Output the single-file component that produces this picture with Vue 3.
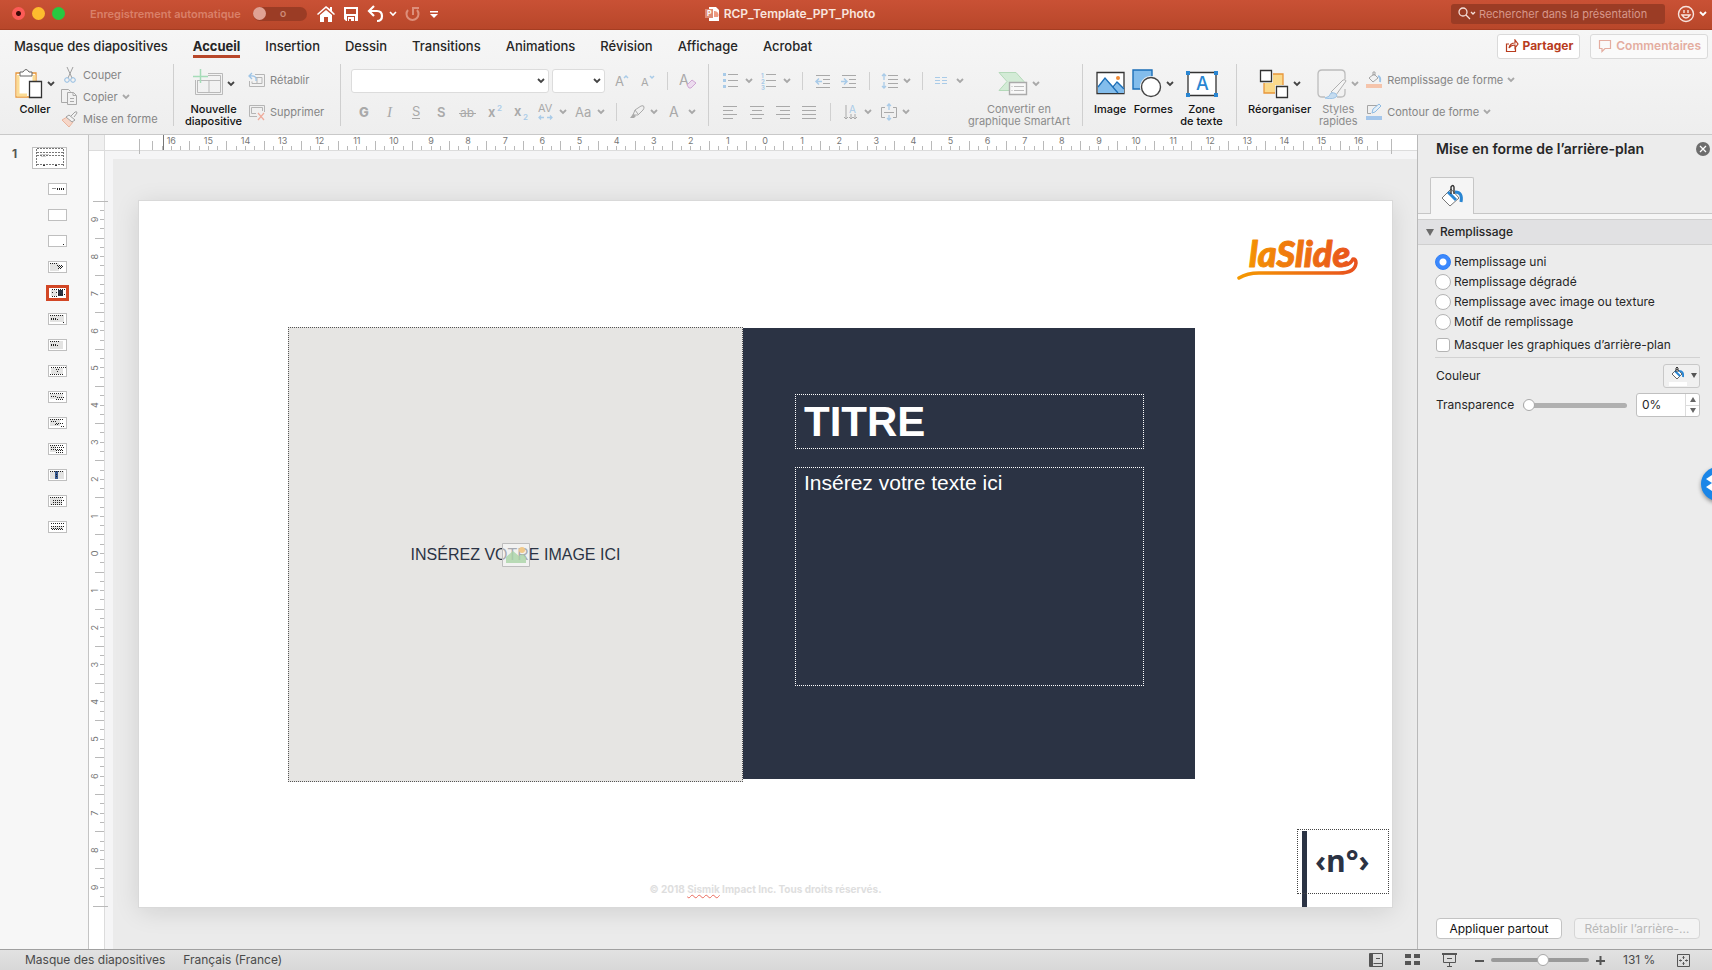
<script setup>
import { ref } from "vue";

const tabs = ["Masque des diapositives", "Accueil", "Insertion", "Dessin", "Transitions", "Animations", "Révision", "Affichage", "Acrobat"];
const activeTab = ref("Accueil");

const fill = ref("uni");
const fills = [
	{ id: "uni", label: "Remplissage uni" },
	{ id: "degrade", label: "Remplissage dégradé" },
	{ id: "image", label: "Remplissage avec image ou texture" },
	{ id: "motif", label: "Motif de remplissage" },
];
const hideGraphics = ref(false);
const transparency = ref(0);
const zoom = ref(131);

// 18x18 icons of the small ribbon tools
const g = "#a9a9a9";
const b = "#a9cbe8";
const bars = (list) => list.map(([x, y, w]) => `<path d="M${x} ${y}.5h${w}" stroke="${g}"/>`).join("");
const letter = (t, x, y, size, extra = "") => `<text x="${x}" y="${y}" font-size="${size}" fill="${g}" ${extra}>${t}</text>`;
const icons = {
	bold: letter("G", 4, 14, 13, 'font-weight="800"'),
	italic: letter("I", 6, 14, 15, 'font-style="italic" font-family="Liberation Serif, serif"'),
	underline: letter("S", 5, 13, 13) + `<path d="M5 15.5h8" stroke="${g}"/>`,
	shadow: letter("S", 4, 14, 13, 'font-weight="600"'),
	strike: letter("ab", 1, 14, 12) + `<path d="M0 10.5h17" stroke="${g}"/>`,
	sup: letter("x", 3, 14, 13, 'font-weight="600"') + `<text x="12" y="8" font-size="8" fill="${b}" font-weight="600">2</text>`,
	sub: letter("x", 3, 13, 13, 'font-weight="600"') + `<text x="12" y="17" font-size="8" fill="${b}" font-weight="600">2</text>`,
	kerning: letter("AV", 1, 9, 11) + `<path d="M2 14.5h5M10 14.5h5M4 12.5l-2 2 2 2M13 12.5l2 2-2 2" stroke="${b}" fill="none" stroke-width="1.3"/>`,
	caseAa: letter("Aa", 0, 14, 13),
	grow: letter("A", 3, 14, 13) + `<path d="M12 6l2-2 2 2" stroke="${b}" fill="none" stroke-width="1.5"/>`,
	shrink: letter("A", 3, 14, 11) + `<path d="M12 4l2 2 2-2" stroke="${b}" fill="none" stroke-width="1.5"/>`,
	clear: letter("A", 0, 13, 14) + `<path d="M8 13l5-5 4 3-5 5h-2z" stroke="#cfa6d3" fill="#ecdcee"/>`,
	marker: `<path d="M5 12l2-5 6-4q3-1 3 1t-1 3l-5 5zM7 7l3 4" stroke="${g}" fill="none"/><path d="M2 15l3-4 3 2-2 2z" fill="${g}"/>`,
	color: letter("A", 3, 14, 14),
	bullets: [3, 9, 15].map((y) => `<path d="M0 ${y - 2}h3v3h-3z" fill="${b}"/>`).join("") + bars([[5, 2, 10], [5, 8, 10], [5, 14, 10]]),
	numbers: [1, 2, 3].map((n) => `<text x="0" y="${n * 6}" font-size="6" fill="${b}" font-weight="700">${n}</text>`).join("") + bars([[5, 2, 10], [5, 8, 10], [5, 14, 10]]),
	outdent: bars([[2, 3, 14], [9, 7, 7], [9, 11, 7], [2, 15, 14]]) + `<path d="M8 9.5H2M5 6.5l-3 3 3 3" stroke="${b}" fill="none" stroke-width="1.5"/>`,
	indent: bars([[2, 3, 14], [9, 7, 7], [9, 11, 7], [2, 15, 14]]) + `<path d="M1 9.5h6M4 6.5l3 3-3 3" stroke="${b}" fill="none" stroke-width="1.5"/>`,
	spacing: bars([[7, 3, 10], [7, 7, 10], [7, 11, 10], [7, 15, 10]]) + `<path d="M3 2v6M3 10v6M1 4l2-2 2 2M1 14l2 2 2-2" stroke="${b}" fill="none" stroke-width="1.3"/>`,
	columns: [5, 8, 11].map((y) => `<path d="M1 ${y}.5h5M8 ${y}.5h5" stroke="${b}"/>`).join(""),
	left: bars([[0, 3, 14], [0, 7, 10], [0, 11, 14], [0, 15, 10]]),
	center: bars([[1, 3, 14], [3, 7, 10], [1, 11, 14], [3, 15, 10]]),
	right: bars([[1, 3, 14], [5, 7, 10], [1, 11, 14], [5, 15, 10]]),
	justify: bars([[1, 3, 14], [1, 7, 14], [1, 11, 14], [1, 15, 14]]),
	direction: `<path d="M4 2v14M2 14l2 2 2-2M9 11v5M13 11v5M7 14l2 2 2-2M11 14l2 2 2-2" stroke="${g}" fill="none"/><text x="7" y="10" font-size="10" fill="${b}">A</text>`,
	valign: `<path d="M5 4.5H1.5v10H5M13 4.5h3.5v10H13M4 9.5h10" stroke="${g}" fill="none"/><path d="M9 1v6M9 12v5M7 3l2-2 2 2M7 15l2 2 2-2" stroke="${b}" fill="none" stroke-width="1.3"/>`,
	cut: `<path d="M6 1l5 11M12 1L7 12" stroke="#a0a0a0" fill="none"/><circle cx="6" cy="14" r="2.3" stroke="#8fbbe2" fill="none"/><circle cx="12" cy="14" r="2.3" stroke="#8fbbe2" fill="none"/>`,
	copy: `<path d="M6 14.5H.5v-13h7l2 2M6.500 4.500h6l3 3v9h-9zM12 4.500v3h3M9 10.500h4M9 13.500h4" stroke="#a9a9a9" fill="none"/>`,
	brush: `<path d="M1 10l5-3 6 5-4 5z" fill="#f6d6c8" stroke="#e9b49d"/><path d="M5 7l3-2 6 5-3 2zM10 6l4-4q2-1 2 1l-3 4" fill="#f2f2f2" stroke="#a0a0a0"/>`,
	reset: `<path d="M7 3.5h9.500v12H1.500V10M8 6.500h6v6h-10v-2M9 7v6" stroke="#b5b5b5" fill="none"/><path d="M8 10q1-6-6-5M4 2L1 5l3 3" stroke="#9cc3e6" fill="none" stroke-width="1.3"/>`,
	remove: `<path d="M9 13.5H1.5v-11h15V9M8 10.500H3.500v-6h11V8" stroke="#b5b5b5" fill="none"/><path d="M10 10l6 7M16 10l-6 7" stroke="#efab9b" fill="none" stroke-width="1.2"/>`,
	bucket: `<path d="M4 7l5-4 4 4-5 4zM8 5V1h2v4" stroke="#a5a5a5" fill="none"/><path d="M13 5q3 1 2 6" stroke="#9cc3e6" fill="none" stroke-width="2"/><path d="M1 13h16v4H1z" fill="#f5c4ab"/>`,
	outline: `<path d="M12 2.5H2.5v8H6" stroke="#a5a5a5" fill="none"/><path d="M7 10l1-4 6-5 2 2-6 6z" fill="#e4eff8" stroke="#8fbbe2"/><path d="M1 13h16v4H1z" fill="#a4c6ea"/>`,
};

const fontTools = ["bold", "italic", "underline", "shadow", "strike", "sup", "sub"];
const rows = {
	font: [...fontTools.map((icon) => ({ icon })), { icon: "kerning", menu: true }, { icon: "caseAa", menu: true }, { sep: true }, { icon: "marker", menu: true }, { icon: "color", menu: true }],
	para1: [{ icon: "bullets", menu: true }, { icon: "numbers", menu: true }, { sep: true }, { icon: "outdent" }, { icon: "indent" }, { sep: true }, { icon: "spacing", menu: true }, { sep: true }, { icon: "columns", menu: true }],
	para2: [{ icon: "left" }, { icon: "center" }, { icon: "right" }, { icon: "justify" }, { sep: true }, { icon: "direction", menu: true }, { icon: "valign", menu: true }],
	size: [{ icon: "grow" }, { icon: "shrink" }, { sep: true }, { icon: "clear" }],
};

const clipboard = [
	{ icon: "cut", label: "Couper" },
	{ icon: "copy", label: "Copier", menu: true },
	{ icon: "brush", label: "Mise en forme" },
];
const slideTools = [
	{ icon: "reset", label: "Rétablir" },
	{ icon: "remove", label: "Supprimer" },
];
const shapeTools = [
	{ icon: "bucket", label: "Remplissage de forme", menu: true },
	{ icon: "outline", label: "Contour de forme", menu: true },
];

// Ruler graduations: every quarter of a centimetre, as a percentage of the slide
function graduate(half, max) {
	const out = [];
	for (let q = -max; q <= max; q++) {
		out.push({
			key: q,
			pos: 50 + (q / 4 / half) * 50 + "%",
			tall: Math.abs(q) % 4 === 2,
			label: q % 4 === 0 ? Math.abs(q / 4) : null,
		});
	}
	return out;
}
const hTicks = graduate(16.87, 66);
const vTicks = graduate(9.5, 37);

// Layout thumbnails: grey block, dark marks and dashed placeholders
const layouts = [
	{ marks: "M4 5.5h4", dots: "M9 5h8M9 6h8" },
	{},
	{ dots: "M15 9h2" },
	{ block: [2, 2, 9, 8], dots: "M2 2h8M9 4h6M10 5h5M11 6h4M10 7h3" },
	{ block: [3, 3, 6, 6], dots: "M4 2h13M4 9h6M4 5h1M8 5h2M10 7h7", dark: [10, 3, 5, 6] },
	{ block: [2, 2, 14, 7], dots: "M2 2h14M3 5h6M3 6h7M15 9h2" },
	{ block: [2, 2, 13, 8], dots: "M2 2h10M3 5h6M3 6h7" },
	{ block: [3, 3, 12, 6], dots: "M3 2h15M8 4h3M9 6h2M2 9h14" },
	{ block: [2, 3, 13, 5], dots: "M2 2h14M3 5h5M9 6h7M8 8h7" },
	{ block: [2, 2, 10, 7], dots: "M2 2h14M3 4h5M8 6h8M7 7h4M13 9h3" },
	{ block: [2, 2, 6, 7], dots: "M2 2h14M3 4h13M3 6h12M8 7h8M8 9h8" },
	{ block: [2, 2, 14, 8], dots: "M2 2h14M8 5h2M8 7h2", dark: [7, 2, 3, 8] },
	{ block: [2, 2, 12, 8], dots: "M2 2h14M5 5h11M5 7h10M3 9h12" },
	{ block: [3, 5, 12, 3], dots: "M3 2h14M3 5h14M3 7h12M4 8h12" },
];
const selected = ref(4);
</script>

<template>
	<div class="app">
		<header class="titlebar">
			<div class="lights">
				<i class="light red"></i>
				<i class="light yellow"></i>
				<i class="light green"></i>
			</div>
			<label class="autosave">
				<span>Enregistrement automatique</span>
				<input type="checkbox" class="hidden-box" disabled />
				<span class="switch"><i class="knob"></i><em>O</em></span>
			</label>
			<div class="quick">
				<button aria-label="Accueil">
					<svg width="18" height="18" fill="#fff"><path d="M9 1L0 9l1 1 8-7 8 7 1-1-3-3V2h-2v2zM3 10v7h4v-5h4v5h4v-7L9 5z" /></svg>
				</button>
				<button aria-label="Enregistrer">
					<svg width="16" height="18"><path d="M1 2h14v14H3l-2-2z" fill="#fff" /><path d="M3 4h10v5H3zM4 11h8v5H4z" fill="#bd4a2d" /><path d="M5 12h6v4H8v-2H6v2H5z" fill="#fff" /></svg>
				</button>
				<button aria-label="Annuler" class="pair">
					<svg width="17" height="18" fill="none" stroke="#fff" stroke-width="2.2"><path d="M7 1L2 6l5 5M2 6h8q5 0 5 5t-5 5" /></svg>
					<svg width="8" height="6" fill="none" stroke="#fff" stroke-width="1.6"><path d="M1 1l3 3 3-3" /></svg>
				</button>
				<button aria-label="Rétablir" disabled>
					<svg width="16" height="18" fill="none" stroke="#dd8f7b" stroke-width="2"><path d="M3 5a6 6 0 1 0 9 0M8 10V3h6" /></svg>
				</button>
				<button aria-label="Personnaliser">
					<svg width="10" height="18" fill="#fff"><path d="M1 6h8v1.5H1zM1 9h8l-4 4z" /></svg>
				</button>
			</div>
			<div class="doc">
				<svg width="15" height="16"><path d="M4 1h7l3 3v11H4z" fill="#fff" /><path d="M9 5a4 4 0 0 1 4 6H9z" fill="#ee9a80" /><path d="M0 3h8v9H0z" fill="#dd8a74" /><text x="2" y="10" font-size="7" font-weight="700" fill="#fff">P</text></svg>
				<span>RCP_Template_PPT_Photo</span>
			</div>
			<label class="search">
				<svg width="20" height="14" fill="none" stroke="#f5ded8" stroke-width="1.3"><circle cx="6" cy="5" r="4" /><path d="M9 8l4 4M14 5l2 2 2-2" /></svg>
				<input type="text" placeholder="Rechercher dans la présentation" aria-label="Rechercher dans la présentation" />
			</label>
			<button class="pair smile" aria-label="Commentaires Microsoft">
				<svg width="18" height="18" fill="none" stroke="#f8e4de" stroke-width="1.4"><circle cx="9" cy="9" r="7.5" /><path d="M5 10q4 6 8 0zM7 5v3M11 5v3" /></svg>
				<svg width="8" height="6" fill="none" stroke="#fff" stroke-width="1.8"><path d="M1 1l3 3 3-3" /></svg>
			</button>
		</header>

		<section class="ribbon">
			<div class="tabs">
				<nav>
					<button v-for="t in tabs" :key="t" class="tab" :class="{ active: t === activeTab }" @click="activeTab = t">{{ t }}</button>
				</nav>
				<button class="share">
					<svg width="14" height="14" fill="none" stroke="#b83c1e" stroke-width="1.2"><path d="M4 5H1.5v7.5h9V9M4 9q1-5 6-5V1l3 4-3 4V6q-4 0-6 3z" /></svg>
					Partager
				</button>
				<button class="share faded" disabled>
					<svg width="14" height="14" fill="none" stroke="#e4ada0" stroke-width="1.2"><path d="M1.5 1.5h11v8H7l-3 3v-3H1.5z" /></svg>
					Commentaires
				</button>
			</div>

			<div class="tools">
				<div class="group clip">
					<button class="big">
						<span class="pic">
							<svg width="28" height="30"><path d="M1 4h20v24H1z" fill="#fff" stroke="#e8963a" stroke-width="1.3" /><path d="M3 6v20h9M19 6v6" stroke="#fbdc95" stroke-width="3" fill="none" /><path d="M5 7V3h3q3-5 6 0h3v4z" fill="#fff" stroke="#666" /><path d="M14.5 12.5h12v16h-12z" fill="#fff" stroke="#333" stroke-width="1.3" /></svg>
							<svg class="caret dark"><path d="M1 1l3 3 3-3" /></svg>
						</span>
						<span>Coller</span>
					</button>
					<div class="small three">
						<button v-for="s in clipboard" :key="s.icon" disabled>
							<svg class="ico" v-html="icons[s.icon]"></svg>{{ s.label }}
							<svg v-if="s.menu" class="caret"><path d="M1 1l3 3 3-3" /></svg>
						</button>
					</div>
				</div>

				<div class="group slides">
					<button class="big">
						<span class="pic">
							<svg width="30" height="30" fill="none"><path d="M15 4.5h14.5v21h-27V11M15 6.5h12.5v17h-23V11M5 11.5h22M16 12v12" stroke="#b9b9b9" /><path d="M0 7.5h15M7.5 0v14" stroke="#a5dcb8" stroke-width="1.5" /></svg>
							<svg class="caret dark"><path d="M1 1l3 3 3-3" /></svg>
						</span>
						<span>Nouvelle<br />diapositive</span>
					</button>
					<div class="small">
						<button v-for="s in slideTools" :key="s.icon" disabled><svg class="ico" v-html="icons[s.icon]"></svg>{{ s.label }}</button>
					</div>
				</div>

				<div class="group font">
					<div class="line first">
						<label class="combo family">
							<select aria-label="Police"></select>
							<svg class="caret dark"><path d="M1 1l3 3 3-3" /></svg>
						</label>
						<label class="combo size">
							<select aria-label="Taille de police"></select>
							<svg class="caret dark"><path d="M1 1l3 3 3-3" /></svg>
						</label>
						<template v-for="(t, i) in rows.size" :key="i">
							<i v-if="t.sep" class="bar"></i>
							<button v-else class="slot" :aria-label="t.icon" disabled><svg class="ico" v-html="icons[t.icon]"></svg></button>
						</template>
					</div>
					<div class="line">
						<template v-for="(t, i) in rows.font" :key="i">
							<i v-if="t.sep" class="bar"></i>
							<button v-else class="slot" :class="{ split: t.menu }" :aria-label="t.icon" disabled>
								<svg class="ico" v-html="icons[t.icon]"></svg>
								<svg v-if="t.menu" class="caret"><path d="M1 1l3 3 3-3" /></svg>
							</button>
						</template>
					</div>
				</div>

				<div class="group para">
					<div>
						<div v-for="name in ['para1', 'para2']" :key="name" class="line" :class="{ first: name === 'para1' }">
							<template v-for="(t, i) in rows[name]" :key="i">
								<i v-if="t.sep" class="bar"></i>
								<button v-else class="slot" :class="{ split: t.menu }" :aria-label="t.icon" disabled>
									<svg class="ico" v-html="icons[t.icon]"></svg>
									<svg v-if="t.menu" class="caret"><path d="M1 1l3 3 3-3" /></svg>
								</button>
							</template>
						</div>
					</div>
					<button class="big" disabled>
						<span class="pic">
							<svg width="30" height="30"><path d="M1 3.5h17l8 9-8 9H1l8-9z" fill="#d3ebd6" stroke="#b4d9b9" /><path d="M11.5 13.5h17v12h-17z" fill="#f8f8f8" stroke="#aaa" stroke-width="1.4" /><path d="M16 17.5h10M16 21.5h10M13.5 17.5h1M13.5 21.5h1" stroke="#bbb" /></svg>
							<svg class="caret"><path d="M1 1l3 3 3-3" /></svg>
						</span>
						<span>Convertir en<br />graphique SmartArt</span>
					</button>
				</div>

				<div class="group insert">
					<button class="big">
						<span class="pic">
							<svg width="29" height="30"><path d="M1 3.5h27v21H1z" fill="#fff" stroke="#333" stroke-width="1.3" /><path d="M2 18l7-9 9 9 4-5 6 6v5H2z" fill="#83bdec" /><path d="M2 18l7-9 13 15M17 18l4-5 7 7" fill="none" stroke="#1c6fb8" stroke-width="1.3" /><circle cx="22" cy="9" r="2" fill="#f08a35" /></svg>
						</span>
						<span>Image</span>
					</button>
					<button class="big">
						<span class="pic">
							<svg width="30" height="30"><path d="M1 1h19v19H1z" fill="#83bdec" stroke="#1c6fb8" stroke-width="1.4" /><circle cx="19" cy="18" r="11" fill="#f4f4f4" /><circle cx="19" cy="18" r="9.5" fill="#fff" stroke="#444" stroke-width="1.4" /></svg>
							<svg class="caret dark"><path d="M1 1l3 3 3-3" /></svg>
						</span>
						<span>Formes</span>
					</button>
					<button class="big">
						<span class="pic">
							<svg width="32" height="30"><path d="M2 3.5h28v23H2z" fill="#fff" stroke="#333" stroke-width="1.3" /><path d="M0 2h4v4H0zM28 2h4v4h-4zM0 24h4v4H0zM28 24h4v4h-4z" fill="#2a86d2" /><text x="10" y="21" font-size="18" fill="#2a86d2">A</text></svg>
						</span>
						<span>Zone<br />de texte</span>
					</button>
				</div>

				<div class="group arrange">
					<button class="big">
						<span class="pic">
							<svg width="30" height="30"><path d="M5 5h19v19H5z" fill="#fad98b" stroke="#e8963a" stroke-width="1.3" /><path d="M0 0h14v14H0zM16 16h14v14H16z" fill="#f4f4f4" /><path d="M1.5 1.5h11v11h-11zM17.5 17.5h11v11h-11z" fill="#fff" stroke="#333" stroke-width="1.3" /></svg>
							<svg class="caret dark"><path d="M1 1l3 3 3-3" /></svg>
						</span>
						<span>Réorganiser</span>
					</button>
					<button class="big" disabled>
						<span class="pic">
							<svg width="30" height="30"><path d="M8 28H5q-4 0-4-4V5q0-4 4-4h19q4 0 4 4v5M28 20v4q0 4-4 4h-4" fill="none" stroke="#bcbcbc" stroke-width="1.3" /><path d="M14 23L26 11q3-1 3 1L19 26z" fill="#f4f4f4" stroke="#b0b0b0" /><path d="M8 29q5-1 6-5 5-1 6 3-3 4-12 2z" fill="#c5dcf0" stroke="#9cc3e6" /></svg>
							<svg class="caret"><path d="M1 1l3 3 3-3" /></svg>
						</span>
						<span>Styles<br />rapides</span>
					</button>
					<div class="small">
						<button v-for="s in shapeTools" :key="s.icon" disabled>
							<svg class="ico" v-html="icons[s.icon]"></svg>{{ s.label }}
							<svg class="caret"><path d="M1 1l3 3 3-3" /></svg>
						</button>
					</div>
				</div>
			</div>
		</section>

		<main class="body">
			<aside class="thumbs">
				<b>1</b>
				<div class="list">
					<button class="thumb master" aria-label="Masque">
						<svg width="33" height="20">
							<path d="M4 .5h26M4 4.5h26M4 7.5h26M4 16.5h26" stroke="#777" stroke-dasharray="2 1" />
							<path d="M3.5 1v17M30.5 1v17" stroke="#777" stroke-dasharray="2 1" />
							<path d="M7 6.5h9M8 8.5h5" stroke="#ccc" />
							<path d="M10 17.5h2M22 17.5h2" stroke="#333" />
						</svg>
					</button>
					<button v-for="(l, i) in layouts" :key="i" class="thumb" :class="{ current: i === selected }" :aria-label="'Disposition ' + (i + 1)" @click="selected = i">
						<svg width="19" height="12">
							<rect v-if="l.block" :x="l.block[0]" :y="l.block[1]" :width="l.block[2]" :height="l.block[3]" fill="#e3e3e2" />
							<rect v-if="l.dark" :x="l.dark[0]" :y="l.dark[1]" :width="l.dark[2]" :height="l.dark[3]" :fill="i === 4 ? '#2b3344' : '#35588f'" />
							<path v-if="l.marks" :d="l.marks" stroke="#999" />
							<path v-if="l.dots" :d="l.dots" transform="translate(0 .5)" stroke="#222" stroke-dasharray="1 1" />
						</svg>
					</button>
				</div>
			</aside>

			<section class="work">
				<div class="corner"></div>
				<div class="ruler across">
					<svg>
						<g shape-rendering="crispEdges">
							<line x1="0" x2="0" y1="4" y2="19" />
							<line x1="100%" x2="100%" y1="4" y2="19" />
							<line v-for="t in hTicks" :key="t.key" :x1="t.pos" :x2="t.pos" :y1="t.tall ? 6 : 11" y2="15" />
							<line x1="24" x2="24" y1="0" y2="15" class="indent" />
						</g>
						<template v-for="t in hTicks" :key="t.key">
							<text v-if="t.label !== null" :x="t.pos" y="9">{{ t.label }}</text>
						</template>
					</svg>
				</div>
				<div class="ruler down">
					<svg>
						<g shape-rendering="crispEdges">
							<line y1="0" y2="0" x1="4" x2="19" />
							<line y1="100%" y2="100%" x1="4" x2="19" />
							<line v-for="t in vTicks" :key="t.key" :y1="t.pos" :y2="t.pos" :x1="t.tall ? 6 : 11" x2="15" />
						</g>
						<template v-for="t in vTicks" :key="t.key">
							<svg v-if="t.label !== null" x="0" :y="t.pos"><text transform="translate(9 0) rotate(-90)">{{ t.label }}</text></svg>
						</template>
					</svg>
				</div>
				<div class="canvas">
					<div class="slide">
						<svg class="logo" width="124" height="60">
							<defs>
								<linearGradient id="brand" gradientUnits="userSpaceOnUse" x1="0" x2="122" y1="0" y2="0">
									<stop offset="0" stop-color="#f59a00" />
									<stop offset="1" stop-color="#e8501e" />
								</linearGradient>
							</defs>
							<text x="13" y="42" fill="url(#brand)" stroke="url(#brand)">laSlide</text>
							<path d="M3 53q8-5 20-5h80q16 0 17-10q0-4-3-4q-2 5-8 6" fill="none" stroke="url(#brand)" stroke-width="3.5" stroke-linecap="round" stroke-linejoin="round" />
						</svg>
						<div class="panel-dark">
							<div class="holder heading">TITRE</div>
							<div class="holder copy">Insérez votre texte ici</div>
						</div>
						<div class="photo">
							<span>INSÉREZ VOTRE IMAGE ICI</span>
							<svg width="28" height="24"><path d="M.5.5h27v23H.5z" fill="#fafafa" fill-opacity=".6" stroke="#bdbdbd" /><circle cx="20" cy="7" r="3" fill="#f0c98a" /><path d="M4 14l7-6 6 5 4-2 3 3v6H4z" fill="#a9d3a6" fill-opacity=".8" /></svg>
						</div>
						<p class="legal">© 2018 <u>Sismik</u> Impact Inc. Tous droits réservés.</p>
						<i class="stripe"></i>
						<div class="number">‹n°›</div>
					</div>
				</div>
			</section>

			<aside class="pane">
				<div class="pane-title">
					<h2>Mise en forme de l’arrière-plan</h2>
					<button aria-label="Fermer">
						<svg width="14" height="14"><circle cx="7" cy="7" r="7" fill="#6d6d6d" /><path d="M4 4l6 6M10 4l-6 6" stroke="#fff" stroke-width="1.3" /></svg>
					</button>
				</div>
				<div class="pane-tabs">
					<button aria-label="Remplissage">
						<svg width="24" height="24" fill="none"><path d="M2 14l9-9 8 9-9 8z" fill="#fff" stroke="#777" /><path d="M8 8l8 8" stroke="#2a86d2" stroke-width="3" /><path d="M15 8q8 0 6 10" stroke="#2a86d2" stroke-width="3" /><path d="M11 10V3q2-3 3 0v7" stroke="#333" stroke-width="1.4" /></svg>
					</button>
				</div>
				<button class="section-head"><i></i>Remplissage</button>
				<div class="form">
					<label v-for="f in fills" :key="f.id" class="option"><input v-model="fill" type="radio" name="fill" :value="f.id" />{{ f.label }}</label>
					<label class="option check"><input v-model="hideGraphics" type="checkbox" />Masquer les graphiques d’arrière-plan</label>
					<div class="field colour">
						<span id="colour-label">Couleur</span>
						<button aria-labelledby="colour-label">
							<svg width="18" height="20" fill="none"><path d="M3 8l5-5 5 5-5 5z" fill="#fff" stroke="#666" /><path d="M6 5l5 5" stroke="#2a86d2" stroke-width="2" /><path d="M10 5q5 0 4 6" stroke="#2a86d2" stroke-width="2" /><path d="M7 6V2q1-2 2 0v4" stroke="#333" /><path d="M0 16h18v4H0z" fill="#fff" /></svg>
							<svg width="6" height="5" fill="#555"><path d="M0 0h6L3 5z" /></svg>
						</button>
					</div>
					<div class="field opacity">
						<label for="opacity">Transparence</label>
						<input id="opacity" v-model="transparency" type="range" min="0" max="100" />
						<div class="spin">
							<input type="text" :value="transparency + '%'" aria-label="Transparence en pourcentage" />
							<div>
								<button aria-label="Augmenter" @click="transparency++"><svg width="6" height="5" fill="#666"><path d="M0 5h6L3 0z" /></svg></button>
								<button aria-label="Diminuer" @click="transparency--"><svg width="6" height="5" fill="#666"><path d="M0 0h6L3 5z" /></svg></button>
							</div>
						</div>
					</div>
				</div>
				<footer>
					<button>Appliquer partout</button>
					<button disabled>Rétablir l’arrière-…</button>
				</footer>
				<div class="bubble">
					<svg width="34" height="34" fill="#fff"><path d="M11 8l6 4-6 4-6-4zM23 8l6 4-6 4-6-4zM11 16l6 4-6 4-6-4zM23 16l6 4-6 4-6-4z" /></svg>
				</div>
			</aside>
		</main>

		<footer class="status">
			<span>Masque des diapositives</span>
			<span>Français (France)</span>
			<div class="views">
				<button aria-label="Normal"><svg width="14" height="14" fill="none" stroke="#555"><path d="M.5.5h13v13H.5zM4.5 10.5h9M7 5.5h4" /><path d="M2.500 0v14" stroke-width="3" /></svg></button>
				<button aria-label="Trieuse"><svg width="15" height="14" fill="#555"><path d="M0 1h6v4H0zM9 1h6v4H9zM0 8h6v4H0zM9 8h6v4H9z" /></svg></button>
				<button aria-label="Diaporama"><svg width="15" height="14" fill="none" stroke="#555"><path d="M0 1h15" stroke-width="2" /><path d="M1.5 2v7.5h12V2M5 5.5h5M7.5 10v3M5 13.5h5" /></svg></button>
			</div>
			<div class="zoomer">
				<button aria-label="Zoom arrière"><svg width="9" height="9" fill="#555"><path d="M0 4h9v2H0z" /></svg></button>
				<input v-model="zoom" type="range" min="24" max="222" aria-label="Zoom" />
				<button aria-label="Zoom avant"><svg width="9" height="9" fill="#555"><path d="M0 4h9v2H0zM3.5 0h2v9h-2z" /></svg></button>
			</div>
			<output>{{ zoom }} %</output>
			<button aria-label="Ajuster"><svg width="13" height="13" fill="none" stroke="#555"><path d="M.5.5h12v12H.5zM6.5 2v3M6.5 8v3M2 6.5h3M8 6.5h3M5.5 3.5l1-1 1 1M5.5 9.5l1 1 1-1M3.5 5.5l-1 1 1 1M9.5 5.5l1 1-1 1" /></svg></button>
		</footer>
	</div>
</template>

<style>
body {
	margin: 0;
	overflow: hidden;
}
</style>

<style scoped>
.app {
	height: 100vh;
	display: grid;
	grid-template-rows: 30px 105px 1fr 21px;
	font: 12px/16px Inter, "Liberation Sans", sans-serif;
	color: #262626;
	background: #f7f7f7;
}
button {
	font: inherit;
	color: inherit;
	background: none;
	border: 0;
	padding: 0;
	display: flex;
	align-items: center;
}
svg {
	display: block;
	flex: none;
}
input,
select {
	font: inherit;
	color: inherit;
	margin: 0;
	box-sizing: border-box;
}

/* title bar */
.titlebar {
	display: flex;
	align-items: center;
	box-sizing: border-box;
	padding: 0 5px 2px 12px;
	background: linear-gradient(#c95135, #b8472a);
	border-bottom: 1px solid #a53d22;
	position: relative;
}
.lights {
	display: flex;
	gap: 7px;
}
.light {
	width: 13px;
	height: 13px;
	border-radius: 50%;
}
.red {
	background: radial-gradient(circle, #3d0a08 2px, #fc5b57 3px);
}
.yellow {
	background: #fdbc2e;
}
.green {
	background: #28c840;
}
.autosave {
	display: flex;
	align-items: center;
	gap: 10px;
	margin-left: 25px;
	font-size: 11px;
	font-weight: 600;
	color: #da8069;
	width: 217px;
	justify-content: space-between;
}
.hidden-box {
	position: absolute;
	opacity: 0;
}
.switch {
	display: flex;
	width: 54px;
	height: 14px;
	border-radius: 7px;
	background: #9b3c25;
	align-items: center;
	gap: 14px;
}
.knob {
	width: 13px;
	height: 13px;
	border-radius: 50%;
	background: #e0a294;
}
.switch em {
	font: 700 8px/14px Inter, sans-serif;
	color: #cf8b7a;
}
.quick {
	display: flex;
	align-items: center;
	gap: 8px;
	margin-left: 10px;
}
.pair {
	gap: 5px;
}
.doc {
	position: absolute;
	left: 0;
	right: 0;
	display: flex;
	justify-content: center;
	align-items: center;
	gap: 4px;
	padding-right: 132px;
	box-sizing: border-box;
	font-size: 12px;
	font-weight: 600;
	color: #f9e5df;
	pointer-events: none;
}
.search {
	margin-left: auto;
	display: flex;
	align-items: center;
	gap: 2px;
	box-sizing: border-box;
	width: 214px;
	height: 20px;
	padding-left: 6px;
	border-radius: 3px;
	background: #9b3c25;
}
.search input {
	flex: 1;
	min-width: 0;
	border: 0;
	padding: 0;
	background: none;
	font-size: 11px;
}
.search input::placeholder {
	color: #d8978a;
}
.smile {
	margin-left: 12px;
	gap: 4px;
}

/* ribbon */
.ribbon {
	box-sizing: border-box;
	background: linear-gradient(#f6f6f6, #eee);
	border-bottom: 1px solid #c9c9c9;
}
.tabs {
	display: flex;
	align-items: center;
	height: 32px;
	padding: 0 4px 0 14px;
	gap: 10px;
}
.tabs nav {
	display: flex;
	gap: 25px;
	margin-right: auto;
}
.tab {
	font-size: 13px;
	font-weight: 500;
	line-height: 18px;
	padding: 3px 0 0;
	border-bottom: 3px solid transparent;
}
.tab.active {
	font-weight: 700;
	border-color: #b8472a;
}
.share {
	gap: 4px;
	height: 25px;
	box-sizing: border-box;
	padding: 0 6px 0 7px;
	border: 1px solid #dadada;
	border-radius: 3px;
	background: #fff;
	font-size: 12px;
	font-weight: 700;
	color: #b83c1e;
}
.faded {
	background: #fafafa;
	color: #e4ada0;
	font-weight: 600;
}
.tools {
	display: flex;
	height: 62px;
	padding-top: 2px;
	font-size: 11px;
	line-height: 12px;
}
.group {
	display: flex;
	align-items: flex-start;
	box-sizing: border-box;
	border-right: 1px solid #cfcfcf;
	flex: none;
}
.clip {
	width: 174px;
	padding-left: 15px;
	gap: 6px;
}
.slides {
	width: 167px;
	padding-left: 11px;
	gap: 6px;
}
.font {
	width: 368px;
	padding-left: 10px;
	flex-direction: column;
}
.para {
	width: 374px;
	padding: 0 12px 0 10px;
	justify-content: space-between;
}
.insert {
	width: 154px;
	padding-left: 11px;
	gap: 6px;
}
.arrange {
	padding-left: 11px;
	gap: 6px;
	border: 0;
}
.big {
	flex-direction: column;
	gap: 4px;
	padding-top: 5px;
	text-align: center;
	font-weight: 500;
	white-space: nowrap;
	color: #111;
}
.big:disabled {
	color: #8c8c8c;
	font-weight: 400;
}
.pic {
	display: flex;
	align-items: center;
	gap: 4px;
	height: 30px;
}
.caret {
	width: 8px;
	height: 6px;
	fill: none;
	stroke: #a8a8a8;
	stroke-width: 1.8;
}
.caret.dark {
	stroke: #444;
}
.ico {
	width: 18px;
	height: 18px;
}
.small button {
	height: 32px;
	gap: 4px;
	color: #858585;
	white-space: nowrap;
}
.small.three button {
	height: 22px;
}
.line {
	display: flex;
	align-items: center;
	height: 18px;
}
.line.first {
	height: 24px;
	margin: 5px 0 10px;
}
.slot {
	width: 26px;
	padding-left: 4px;
	gap: 4px;
}
.split {
	width: 38px;
}
.bar {
	width: 1px;
	height: 18px;
	margin: 0 7px;
	background: #d0d0d0;
}
.combo {
	display: grid;
	align-items: center;
	height: 24px;
	margin-right: 3px;
}
.combo > * {
	grid-area: 1 / 1;
}
.combo .caret {
	justify-self: end;
	margin-right: 4px;
	pointer-events: none;
}
.combo select {
	appearance: none;
	width: 100%;
	height: 24px;
	border: 1px solid #dcdcdc;
	border-radius: 3px;
	background: #fff;
}
.family {
	width: 198px;
}
.size {
	width: 53px;
}

/* work area */
.body {
	display: grid;
	grid-template-columns: 89px 1fr 295px;
	min-height: 0;
}
.thumbs {
	display: flex;
	justify-content: space-between;
	align-items: flex-start;
	box-sizing: border-box;
	padding: 12px 21px 0 12px;
	border-right: 1px solid #c4c4c4;
	background: #f7f7f7;
}
.thumbs b {
	font-size: 12px;
	line-height: 14px;
	color: #555;
}
.list {
	display: flex;
	flex-direction: column;
	align-items: flex-end;
	gap: 14px;
}
.thumb {
	justify-content: center;
	box-sizing: border-box;
	width: 19px;
	height: 12px;
	background: #fff;
	outline: 1px solid #bfbfbf;
	outline-offset: -1px;
}
.master {
	width: 35px;
	height: 22px;
}
.current {
	outline: 3px solid #d24726;
}
.work {
	display: grid;
	grid-template: 16px 1fr / 16px 1fr;
	min-width: 0;
}
.corner {
	background: #f0f0f0;
	border-right: 1px solid #dcdcdc;
	border-bottom: 1px solid #dcdcdc;
}
.ruler {
	background: #fff;
	z-index: 1;
}
.ruler svg {
	overflow: visible;
}
.ruler line {
	stroke: #b9b9b9;
}
.ruler .indent {
	stroke: #777;
}
.ruler text {
	font-size: 9px;
	fill: #777;
	text-anchor: middle;
}
.across {
	padding: 0 26px 0 34px;
	border-bottom: 1px solid #dcdcdc;
}
.across > svg {
	width: 100%;
	height: 15px;
}
.down {
	padding: 50px 0 43px;
	border-right: 1px solid #dcdcdc;
}
.down > svg {
	width: 15px;
	height: 100%;
}
.canvas {
	display: grid;
	padding: 42px 25px 42px 26px;
	border: solid #f5f5f6;
	border-width: 8px 0 0 8px;
	background: #ebebeb;
}
.slide {
	position: relative;
	background: #fff;
	box-shadow: 0 0 0 1px #d9d9d9, 0 4px 24px rgba(0, 0, 0, 0.12);
	color: #2b3344;
	font-family: "Liberation Sans", Arial, sans-serif;
}
.logo {
	position: absolute;
	right: 32px;
	top: 24px;
	overflow: visible;
}
.logo text {
	font: italic 900 36px Lato, sans-serif;
	stroke-width: 1;
	stroke-linejoin: round;
}
.photo {
	position: absolute;
	left: 149px;
	top: 126px;
	width: 453px;
	height: 453px;
	border: 1px dotted #555;
	background: #e6e5e3;
	display: grid;
	place-items: center;
	font-size: 16px;
}
.photo > * {
	grid-area: 1 / 1;
}
.panel-dark {
	position: absolute;
	left: 603px;
	top: 127px;
	width: 400px;
	height: 385px;
	padding: 66px 0 0 53px;
	background: #2b3344;
	color: #fff;
}
.holder {
	width: 331px;
	padding: 0 8px;
	border: 1px dotted #fff;
}
.heading {
	height: 53px;
	margin-bottom: 18px;
	font-size: 42px;
	font-weight: 700;
	line-height: 53px;
}
.copy {
	height: 217px;
	font-size: 21px;
	line-height: 30px;
}
.legal {
	position: absolute;
	left: 0;
	right: 0;
	bottom: 10px;
	margin: 0;
	text-align: center;
	font: 700 10px/16px Inter, sans-serif;
	color: #dedede;
}
.legal u {
	text-decoration: underline wavy #ea6a5c 1px;
}
.stripe {
	position: absolute;
	right: 85px;
	bottom: 0;
	width: 5px;
	height: 76px;
	background: #2b3344;
}
.number {
	position: absolute;
	right: 3px;
	bottom: 13px;
	width: 73px;
	height: 63px;
	padding-left: 17px;
	border: 1px dotted #444;
	font: 700 30px/62px "Open Sans", sans-serif;
}

/* format pane */
.pane {
	position: relative;
	overflow: hidden;
	display: flex;
	flex-direction: column;
	border-left: 1px solid #b9b9b9;
	background: #ececec;
}
.pane-title {
	display: flex;
	align-items: center;
	justify-content: space-between;
	height: 28px;
	padding: 0 2px 0 18px;
}
.pane-title h2 {
	margin: 0;
	font-size: 14px;
	font-weight: 600;
}
.pane-tabs {
	display: flex;
	padding: 14px 12px 0;
	border-bottom: 1px solid #c6c6c6;
}
.pane-tabs button {
	justify-content: center;
	width: 44px;
	height: 37px;
	margin-bottom: -1px;
	box-sizing: border-box;
	border: 1px solid #c6c6c6;
	border-bottom: 0;
	border-radius: 2px 2px 0 0;
	background: #f5f5f5;
}
.section-head {
	gap: 6px;
	height: 26px;
	margin-top: 5px;
	padding-left: 8px;
	border: solid #cfcfcf;
	border-width: 1px 0;
	background: #e1e1e3;
	box-shadow: 0 -5px #f5f5f5;
	font-weight: 500;
}
.section-head i {
	border: solid transparent;
	border-width: 7px 4px 0;
	border-top-color: #6b6b6b;
}
.form {
	display: flex;
	flex-direction: column;
	padding: 7px 12px 0 17px;
	font-size: 12px;
}
.option {
	display: flex;
	align-items: center;
	gap: 3px;
	height: 20px;
	white-space: nowrap;
}
.option input {
	appearance: none;
	width: 16px;
	height: 16px;
	border: 1px solid #b4b4b4;
	border-radius: 50%;
	background: #fff;
}
.option input:checked {
	border-color: #2f7ff5;
	background: radial-gradient(circle, #fff 3px, #3b88fd 4px);
}
.option.check {
	gap: 4px;
	height: 24px;
	padding: 1px 0 0 1px;
	border-bottom: 1px solid #d2d2d2;
}
.check input {
	width: 14px;
	height: 14px;
	border-radius: 3px;
}
.field {
	display: flex;
	align-items: center;
	padding-left: 1px;
}
.colour {
	justify-content: space-between;
	height: 35px;
}
.colour button {
	gap: 4px;
	width: 37px;
	height: 24px;
	box-sizing: border-box;
	padding-left: 5px;
	border: 1px solid #c8c8c8;
	border-radius: 3px;
	background: #f0f0f0;
}
.opacity {
	gap: 9px;
	height: 24px;
}
input[type="range"] {
	appearance: none;
	height: 14px;
	background: none;
}
input[type="range"]::-webkit-slider-runnable-track {
	height: 5px;
	border-radius: 3px;
	background: #b0b0b0;
}
input[type="range"]::-webkit-slider-thumb {
	appearance: none;
	width: 12px;
	height: 12px;
	margin-top: -4px;
	border: 1px solid #a8a8a8;
	border-radius: 50%;
	background: #fff;
}
.opacity input[type="range"] {
	flex: 1;
	min-width: 0;
}
.spin {
	display: flex;
	box-sizing: border-box;
	width: 64px;
	height: 24px;
	border: 1px solid #c0c0c0;
	border-radius: 3px;
	background: #fff;
}
.spin input {
	width: 48px;
	padding: 0 0 0 5px;
	border: 0;
	background: none;
}
.spin div {
	flex: 1;
	display: grid;
	border-left: 1px solid #dcdcdc;
}
.spin button {
	justify-content: center;
}
.spin button + button {
	border-top: 1px solid #dcdcdc;
}
.pane footer {
	display: flex;
	gap: 12px;
	margin-top: auto;
	padding: 0 12px 10px 18px;
}
.pane footer button {
	flex: 1;
	justify-content: center;
	height: 21px;
	box-sizing: border-box;
	border: 1px solid #c3c3c3;
	border-radius: 4px;
	background: #fff;
	color: #111;
	white-space: nowrap;
}
.pane footer button:disabled {
	background: #f3f3f3;
	border-color: #d6d6d6;
	color: #b8b8b8;
}
.bubble {
	position: absolute;
	top: 332px;
	right: -23px;
	width: 34px;
	height: 34px;
	border-radius: 50%;
	background: #1a86e8;
	box-shadow: 0 2px 4px rgba(0, 0, 0, 0.4);
}

/* status bar */
.status {
	display: flex;
	align-items: center;
	gap: 18px;
	box-sizing: border-box;
	padding: 0 22px 0 25px;
	border-top: 1px solid #a0a0a0;
	background: linear-gradient(#e2e2e2, #d8d8d8);
	color: #4a4a4a;
}
.views {
	display: flex;
	gap: 22px;
	margin-left: auto;
}
.zoomer {
	display: flex;
	align-items: center;
	gap: 7px;
}
.zoomer input {
	width: 98px;
}
.zoomer input::-webkit-slider-runnable-track {
	height: 4px;
	background: #9a9a9a;
}
.status output {
	min-width: 36px;
	white-space: nowrap;
}
</style>
